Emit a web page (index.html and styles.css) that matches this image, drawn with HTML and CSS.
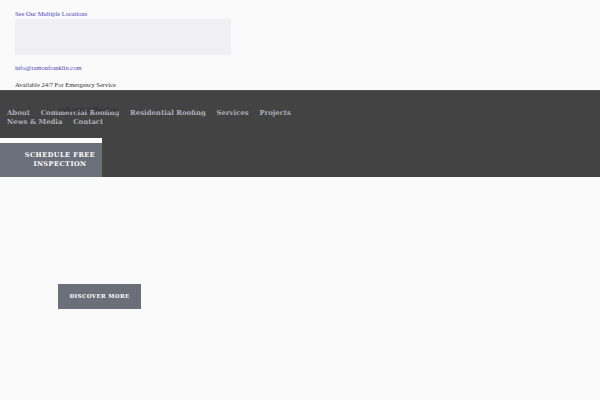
FILE: index.html
```html
<!DOCTYPE html>
<html>
<head>
<meta charset="utf-8">
<link rel="stylesheet" href="styles.css">
</head>
<body>
<div class="topbar">
  <a class="link loc" href="#">See Our Multiple Locations</a>
  <div class="mapbox"></div>
  <a class="link mail" href="#">info@ramonfranklin.com</a>
  <p class="avail">Available 24/7 For Emergency Service</p>
</div>
<header class="band">
  <nav class="nav">
    <a class="item" href="#">About</a>
    <a class="item has-sub" href="#">Commercial Roofing<span class="sub">Industrial Roofing</span></a>
    <a class="item" href="#">Residential Roofing</a>
    <a class="item" href="#">Services</a>
    <a class="item" href="#">Projects</a>
    <a class="item" href="#">News &amp; Media</a>
    <a class="item" href="#">Contact</a>
  </nav>
  <div class="cta-wrap">
    <a class="cta" href="#">SCHEDULE FREE<br>INSPECTION</a>
  </div>
</header>
<main class="hero">
  <a class="discover" href="#">DISCOVER MORE</a>
</main>
</body>
</html>
```
FILE: styles.css
```css
html, body {
  margin: 0;
  padding: 0;
  background: #fafafa;
  font-family: "DejaVu Serif", serif;
}
.topbar {
  padding: 10px 0 0 15px;
  height: 90px;
  box-sizing: border-box;
  display: flex;
  flex-direction: column;
  align-items: flex-start;
}
.link {
  color: #4a45b5;
  text-decoration: none;
  font-family: "Liberation Serif", serif;
  font-size: 6.5px;
  line-height: 8px;
}
.mapbox {
  flex-shrink: 0;
  width: 216px;
  height: 36px;
  background: #f0f0f4;
  margin-top: 1px;
}
.mail {
  margin-top: 9px;
}
.avail {
  margin: 9px 0 0;
  font-family: "Liberation Serif", serif;
  font-size: 6.5px;
  line-height: 8px;
  color: #333;
}
.band {
  background: #434344;
  border-top: 1px solid #555;
  height: 87px;
  box-sizing: border-box;
  padding-top: 18px;
}
.nav {
  display: flex;
  flex-wrap: wrap;
  column-gap: 10.7px;
  padding: 0 7px;
  width: 305px;
  box-sizing: border-box;
}
.item {
  display: block;
  color: #acacb6;
  text-decoration: none;
  font-size: 6.9px;
  font-weight: bold;
  line-height: 9px;
  white-space: nowrap;
}
.has-sub {
  position: relative;
}
.sub {
  position: absolute;
  left: 18px;
  top: -3px;
  font-size: 6.5px;
  font-weight: normal;
  color: #2a2a2e;
  white-space: nowrap;
}
.cta-wrap {
  margin-top: 11px;
  width: 102px;
  border-top: 5px solid #ffffff;
}
.cta {
  display: flex;
  align-items: center;
  justify-content: center;
  text-align: center;
  height: 34px;
  padding-left: 18px;
  background: #6b6f7a;
  color: #fff;
  text-decoration: none;
  font-size: 6.5px;
  font-weight: bold;
  letter-spacing: 0.5px;
  line-height: 9px;
}
.hero {
  padding: 106px 0 0 58px;
}
.discover {
  display: inline-flex;
  align-items: center;
  justify-content: center;
  width: 83px;
  height: 25px;
  background: #6b6f7a;
  color: #fff;
  text-decoration: none;
  font-size: 5.5px;
  font-weight: bold;
  letter-spacing: 0.4px;
}
```
